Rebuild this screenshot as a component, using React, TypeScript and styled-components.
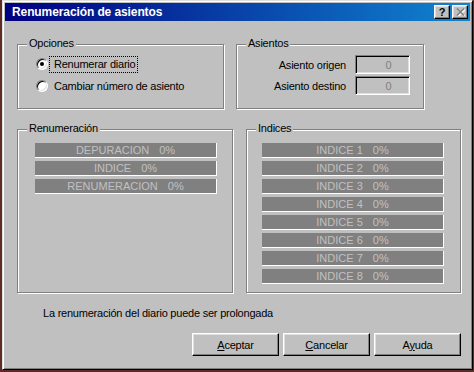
import styled, { createGlobalStyle } from 'styled-components'

const GlobalStyle = createGlobalStyle`
    html, body {
        margin: 0;
        padding: 0;
    }
    body {
        width: 474px;
        height: 372px;
        overflow: hidden;
        background: #5e2b27;
        font-family: "Liberation Sans", Arial, sans-serif;
        font-size: 11px;
        letter-spacing: -0.22px;
        color: #000;
    }
`;

const renumeracion = ['DEPURACION', 'INDICE', 'RENUMERACION'];
const indices = [1, 2, 3, 4, 5, 6, 7, 8].map((n) => `INDICE ${n}`);

export default function App() {
    return (
        <>
            <GlobalStyle />
            <Window>
                <TitleBar>
                    <Title>Renumeración de asientos</Title>
                    <TitleButtons>
                        <TitleButton>?</TitleButton>
                        <TitleButton $disabled>
                            <svg width="9" height="8" viewBox="0 0 9 8">
                                <path d="M1 0.5 L8 7.5 M8 0.5 L1 7.5" stroke="#fff" strokeWidth="1.6" transform="translate(1 1)" />
                                <path d="M1 0.5 L8 7.5 M8 0.5 L1 7.5" stroke="#808080" strokeWidth="1.6" />
                            </svg>
                        </TitleButton>
                    </TitleButtons>
                </TitleBar>

                <Content>
                    <Row $top={23}>
                        <Group $width={207} $height={65}>
                            <Legend>Opciones</Legend>
                            <RadioList>
                                <RadioRow>
                                    <RadioMark $checked />
                                    <RadioLabel $focused>Renumerar diario</RadioLabel>
                                </RadioRow>
                                <RadioRow>
                                    <RadioMark />
                                    <RadioLabel>Cambiar número de asiento</RadioLabel>
                                </RadioRow>
                            </RadioList>
                        </Group>
                        <Group $width={188} $height={65} $gap={12}>
                            <Legend>Asientos</Legend>
                            <FieldGrid>
                                <FieldLabel>Asiento origen</FieldLabel>
                                <Field>0</Field>
                                <FieldLabel>Asiento destino</FieldLabel>
                                <Field>0</Field>
                            </FieldGrid>
                        </Group>
                    </Row>

                    <Row $top={20}>
                        <Group $width={216} $height={164}>
                            <Legend>Renumeración</Legend>
                            <BarList $left={17}>
                                {renumeracion.map((name) => (
                                    <Bar key={name}>
                                        <span>{name}</span>
                                        <Pct>0%</Pct>
                                    </Bar>
                                ))}
                            </BarList>
                        </Group>
                        <Group $width={215} $height={164} $gap={13}>
                            <Legend>Indices</Legend>
                            <BarList $left={15}>
                                {indices.map((name) => (
                                    <Bar key={name}>
                                        <span>{name}</span>
                                        <Pct>0%</Pct>
                                    </Bar>
                                ))}
                            </BarList>
                        </Group>
                    </Row>

                    <Status>La renumeración del diario puede ser prolongada</Status>

                    <Buttons>
                        <Button><u>A</u>ceptar</Button>
                        <Button><u>C</u>ancelar</Button>
                        <Button>A<u>y</u>uda</Button>
                    </Buttons>
                </Content>
            </Window>
        </>
    );
}

const Window = styled.div`
    box-sizing: border-box;
    margin-left: 2px;
    width: 471px;
    height: 370px;
    padding: 2px;
    background: #c0c0c0;
    border: 1px solid;
    border-color: #dfdfdf #000 #000 #dfdfdf;
    box-shadow: inset 1px 1px 0 #fff, inset -1px -1px 0 #808080;
    display: flex;
    flex-direction: column;
`;

const TitleBar = styled.div`
    height: 18px;
    display: flex;
    align-items: center;
    justify-content: space-between;
    padding: 0 2px 0 7px;
    background: linear-gradient(to right, #000080, #1084d0);
`;

const Title = styled.span`
    color: #fff;
    font-weight: 700;
    font-size: 12px;
    letter-spacing: -0.1px;
`;

const TitleButtons = styled.div`
    display: flex;
    gap: 2px;
`;

const TitleButton = styled.div<{ $disabled?: boolean }>`
    box-sizing: border-box;
    width: 16px;
    height: 14px;
    display: flex;
    align-items: center;
    justify-content: center;
    background: #c0c0c0;
    border: 1px solid;
    border-color: #fff #000 #000 #fff;
    box-shadow: inset -1px -1px 0 #808080, inset 1px 1px 0 #dfdfdf;
    font-weight: 700;
    font-size: 11px;
    line-height: 1;
    color: ${(p) => (p.$disabled ? '#808080' : '#000')};
`;

const Content = styled.div`
    display: flex;
    flex-direction: column;
    padding: 0 9px 0 12px;
`;

const Row = styled.div<{ $top: number }>`
    display: flex;
    align-items: flex-start;
    margin-top: ${(p) => p.$top}px;
`;

const Group = styled.div<{ $width: number; $height: number; $gap?: number }>`
    position: relative;
    box-sizing: border-box;
    width: ${(p) => p.$width}px;
    height: ${(p) => p.$height}px;
    margin-left: ${(p) => p.$gap ?? 0}px;
    border: 1px solid #808080;
    box-shadow: inset 1px 1px 0 #fff, 1px 1px 0 #fff;
`;

const Legend = styled.span`
    position: absolute;
    top: -8px;
    left: 9px;
    padding: 0 2px;
    background: #c0c0c0;
    line-height: 13px;
`;

const RadioList = styled.div`
    display: flex;
    flex-direction: column;
    gap: 6px;
    padding: 11px 0 0 18px;
`;

const RadioRow = styled.div`
    display: flex;
    align-items: center;
    height: 16px;
`;

const RadioMark = styled.span<{ $checked?: boolean }>`
    position: relative;
    box-sizing: border-box;
    width: 12px;
    height: 12px;
    border-radius: 50%;
    background: #fff;
    border: 1px solid;
    border-color: #808080 #fff #fff #808080;
    box-shadow: inset 1px 1px 0 #000, inset -1px -1px 0 #dfdfdf;

    &::after {
        content: '';
        display: ${(p) => (p.$checked ? 'block' : 'none')};
        position: absolute;
        left: 3px;
        top: 3px;
        width: 4px;
        height: 4px;
        border-radius: 50%;
        background: #000;
    }
`;

const RadioLabel = styled.span<{ $focused?: boolean }>`
    margin-left: 1px;
    padding: 1px 2px 1px 4px;
    line-height: 13px;
    border: 1px dotted ${(p) => (p.$focused ? '#000' : 'transparent')};
`;

const FieldGrid = styled.div`
    display: grid;
    grid-template-columns: auto 55px;
    justify-content: end;
    align-items: center;
    column-gap: 9px;
    row-gap: 2px;
    padding: 10px 13px 0 0;
`;

const FieldLabel = styled.span`
    text-align: right;
`;

const Field = styled.div`
    box-sizing: border-box;
    height: 19px;
    padding-left: 12px;
    display: flex;
    align-items: center;
    justify-content: center;
    color: #808080;
    background: #c0c0c0;
    border: 1px solid;
    border-color: #808080 #fff #fff #808080;
    box-shadow: inset 1px 1px 0 #000, inset -1px -1px 0 #dfdfdf;
`;

const BarList = styled.div<{ $left: number }>`
    display: flex;
    flex-direction: column;
    gap: 3px;
    padding: 13px 0 0 ${(p) => p.$left}px;
`;

const Bar = styled.div`
    box-sizing: border-box;
    width: 182px;
    height: 15px;
    display: flex;
    justify-content: center;
    align-items: center;
    background: #808080;
    border-right: 1px solid #fff;
    border-bottom: 1px solid #fff;
    color: #c0c0c0;
    font-size: 11px;
    line-height: 14px;
    letter-spacing: 0;
`;

const Pct = styled.span`
    margin-left: 10px;
`;

const Status = styled.div`
    margin-top: 14px;
    padding-left: 26px;
    line-height: 13px;
`;

const Buttons = styled.div`
    display: flex;
    justify-content: flex-end;
    gap: 4px;
    margin-top: 13px;
`;

const Button = styled.button`
    box-sizing: border-box;
    width: 87px;
    height: 23px;
    padding: 0;
    background: #c0c0c0;
    border: 1px solid;
    border-color: #fff #000 #000 #fff;
    box-shadow: inset -1px -1px 0 #808080, inset 1px 1px 0 #dfdfdf;
    font-family: "Liberation Sans", Arial, sans-serif;
    font-size: 11px;
    letter-spacing: -0.22px;
    color: #000;

    u {
        text-underline-offset: 1px;
    }
`;
